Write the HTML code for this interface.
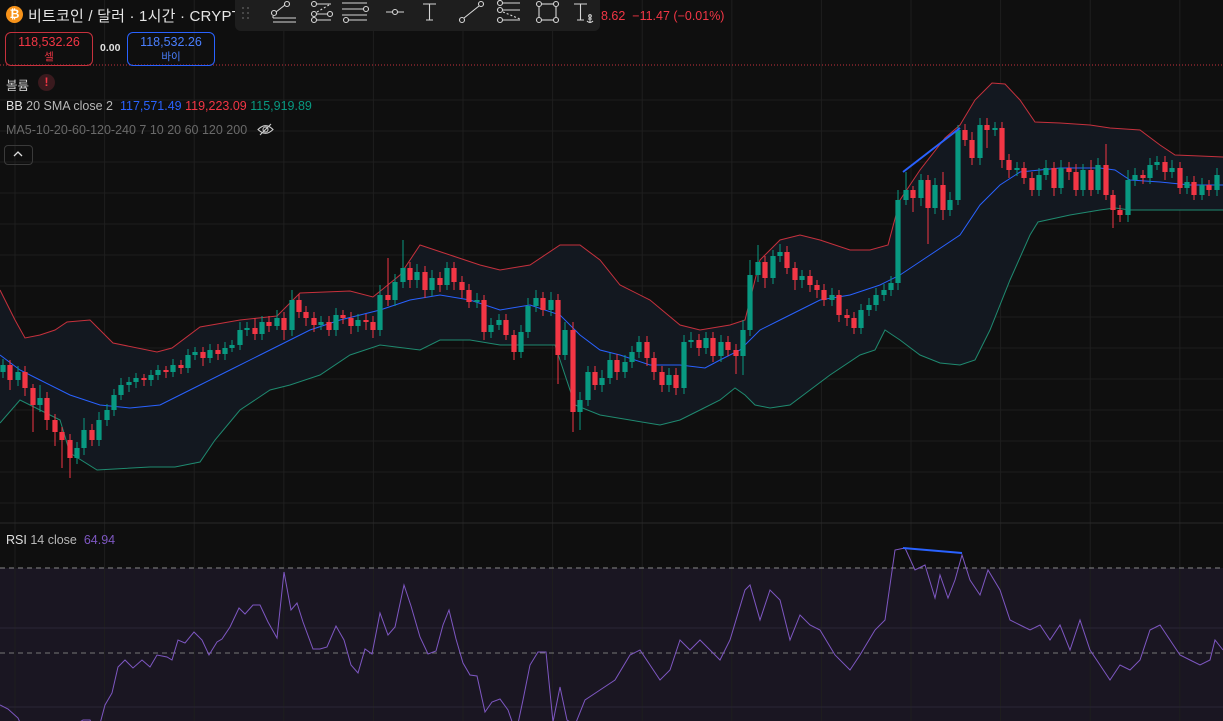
<!DOCTYPE html>
<html><head><meta charset="utf-8">
<style>
html,body{margin:0;padding:0;background:#0f0f0f;width:1223px;height:721px;overflow:hidden;font-family:"Liberation Sans","Noto Sans CJK KR",sans-serif;}
.t{position:absolute;white-space:nowrap}
</style></head><body>
<svg style="position:absolute;left:0;top:0" width="1223" height="721" xmlns="http://www.w3.org/2000/svg">
<rect x="0" y="568" width="1223" height="153" fill="#1a1622"/>
<g stroke="#1e1e1e">
<path d="M15 0V721M104.6 0V721M194.2 0V721M283.8 0V721M373.4 0V721M463 0V721M552.6 0V721M642.2 0V721M731.8 0V721M821.4 0V721M911 0V721M1000.6 0V721M1090.2 0V721M1179.8 0V721"/>
<path d="M0 100H1223M0 131H1223M0 162H1223M0 193H1223M0 224H1223M0 255H1223M0 286H1223M0 317H1223M0 348H1223M0 379H1223M0 410H1223M0 441H1223M0 472H1223M0 503H1223"/>
</g>
<line x1="0" y1="523" x2="1223" y2="523" stroke="#2a2a2a"/>
<path d="M0 628H1223M0 707H1223" stroke="#2a2535"/>
<line x1="0" y1="568" x2="1223" y2="568" stroke="#888" stroke-dasharray="5 4"/>
<line x1="0" y1="653" x2="1223" y2="653" stroke="#777" stroke-dasharray="5 4"/>
<line x1="0" y1="65" x2="1223" y2="65" stroke="#c6313d" stroke-dasharray="1 2"/>

<polygon fill="#131820" points="0,290 15,320 25,338 40,335 55,330 67,322 90,320 113,343 157,352 172,348 200,327 240,320 277,316 300,293 350,291 373,297 400,275 420,245 450,255 480,265 500,270 530,265 560,245 580,245 600,260 620,285 650,300 680,325 700,330 730,325 745,320 760,260 780,240 800,235 820,240 850,250 870,250 888,245 900,200 920,170 945,138 960,125 975,100 992,83 1005,84 1020,100 1035,122 1060,123 1090,125 1110,128 1140,130 1160,145 1175,155 1200,156 1223,157 1223,210 1160,210 1130,210 1115,208 1100,210 1070,215 1038,222 1030,235 1010,280 990,330 975,360 960,365 940,363 920,355 900,340 885,330 875,350 860,355 830,375 810,390 790,405 770,408 755,405 745,395 735,388 720,400 700,410 680,420 660,425 630,420 600,415 575,405 555,345 530,345 500,345 470,340 440,340 420,350 380,345 350,355 320,375 290,385 270,390 240,410 215,440 200,462 175,467 150,467 97,470 70,453 60,420 20,400 0,423"/>
<polyline fill="none" stroke="#c6313d" points="0,290 15,320 25,338 40,335 55,330 67,322 90,320 113,343 157,352 172,348 200,327 240,320 277,316 300,293 350,291 373,297 400,275 420,245 450,255 480,265 500,270 530,265 560,245 580,245 600,260 620,285 650,300 680,325 700,330 730,325 745,320 760,260 780,240 800,235 820,240 850,250 870,250 888,245 900,200 920,170 945,138 960,125 975,100 992,83 1005,84 1020,100 1035,122 1060,123 1090,125 1110,128 1140,130 1160,145 1175,155 1200,156 1223,157"/>
<polyline fill="none" stroke="#2962ff" points="0,355 20,370 40,380 70,395 100,405 130,408 160,405 180,395 200,385 230,370 260,355 280,345 310,330 340,320 380,310 410,300 440,295 470,300 500,310 530,305 560,315 580,335 600,350 620,355 650,365 680,365 705,368 720,360 740,350 760,330 780,320 800,310 820,300 850,295 880,285 900,275 930,255 960,235 980,205 1000,185 1020,172 1040,170 1060,168 1080,168 1100,168 1115,170 1130,180 1160,182 1190,185 1223,185"/>
<polyline fill="none" stroke="#1f8a70" points="0,423 20,400 60,420 70,453 97,470 150,467 175,467 200,462 215,440 240,410 270,390 290,385 320,375 350,355 380,345 420,350 440,340 470,340 500,345 530,345 555,345 575,405 600,415 630,420 660,425 680,420 700,410 720,400 735,388 745,395 755,405 770,408 790,405 810,390 830,375 860,355 875,350 885,330 900,340 920,355 940,363 960,365 975,360 990,330 1010,280 1030,235 1038,222 1070,215 1100,210 1115,208 1130,210 1160,210 1223,210"/>

<g stroke="#089981">
<path stroke-width="1" d="M3 359V378M18 366V386M40 385V412M77 442V464M84 418V455M99 412V446M107 404V426M114 389V416M121 378V400M129 377V392M136 373V388M151 370V386M158 365V380M173 359V377M188 349V373M195 347V360M210 344V363M225 342V360M232 340V352M240 322V350M247 322V336M262 316V340M277 310V330M292 290V336M321 316V330M336 308V336M358 314V332M380 285V336M395 274V306M403 240V288M417 264V288M432 270V296M447 262V290M477 293V308M491 318V338M499 314V330M521 325V358M528 298V338M536 290V312M551 292V316M565 322V360M580 392V430M588 366V406M602 370V392M610 353V384M625 355V378M632 346V368M639 336V358M669 368V392M684 335V394M691 332V348M706 332V354M721 335V362M743 320V375M750 260V336M758 245V282M773 250V284M780 244V262M802 270V288M832 288V306M861 304V334M869 298V316M876 288V311M884 284V301M891 276V296M898 190V290M906 172V205M921 174V206M935 178V214M950 192V216M958 125V205M980 118V165M995 122V136M1017 162V176M1039 168V196M1046 160V180M1061 160V194M1083 164V196M1098 158V194M1128 170V222M1135 168V186M1150 158V184M1157 156V170M1172 160V178M1187 176V194M1202 178V200M1217 168V196"/>
<path stroke-width="5.2" d="M3 365V372M18 372V380M40 398V405M77 448V458M84 430V448M99 420V440M107 410V420M114 395V410M121 385V395M129 382V385M136 378V382M151 375V380M158 370V375M173 365V372M188 355V368M195 352V355M210 350V358M225 348V354M232 345V348M240 330V345M247 328V330M262 322V334M277 318V326M292 300V330M321 322V325M336 315V330M358 320V326M380 295V330M395 282V300M403 268V282M417 272V280M432 278V290M447 268V285M477 300V302M491 325V332M499 320V325M521 332V352M528 306V332M536 298V306M551 300V310M565 330V355M580 400V412M588 372V400M602 378V385M610 360V378M625 362V372M632 352V362M639 342V352M669 375V385M684 342V388M691 340V342M706 338V348M721 342V356M743 330V356M750 275V330M758 262V275M773 256V278M780 252V256M802 276V280M832 295V300M861 310V328M869 305V310M876 295V305M884 290V295M891 283V290M898 200V283M906 190V200M921 180V198M935 185V208M950 200V210M958 130V200M980 125V158M995 128V130M1017 168V170M1039 175V190M1046 168V175M1061 168V188M1083 170V190M1098 165V190M1128 180V215M1135 175V180M1150 165V178M1157 162V165M1172 168V172M1187 182V188M1202 185V195M1217 175V190"/>
</g>
<g stroke="#f23645">
<path stroke-width="1" d="M10 360V390M25 366V396M33 384V432M47 392V430M55 414V446M62 427V468M70 434V478M92 424V446M144 374V386M166 366V378M181 360V374M203 347V366M218 344V360M255 318V340M269 316V332M284 312V340M299 294V318M306 306V326M314 312V332M329 316V336M343 310V324M351 312V334M366 314V330M373 316V338M388 258V306M410 262V288M425 266V298M440 272V292M454 262V290M462 276V298M469 284V308M484 295V340M506 314V340M514 330V360M543 292V316M558 294V384M573 322V432M595 366V390M617 354V380M647 336V366M654 352V380M662 366V392M676 368V395M699 334V356M713 332V362M728 336V356M736 344V374M765 256V288M787 246V274M795 262V290M810 270V292M817 280V298M824 284V306M839 290V322M847 309V326M854 312V334M913 186V212M928 175V244M943 172V220M965 124V146M972 132V165M987 118V148M1002 122V168M1009 154V178M1024 162V184M1032 172V196M1054 162V196M1069 162V180M1076 164V196M1091 160V196M1106 144V200M1113 190V228M1120 205V222M1143 170V184M1165 156V180M1180 162V194M1194 176V200M1209 180V196"/>
<path stroke-width="5.2" d="M10 365V380M25 372V388M33 388V405M47 398V420M55 420V432M62 432V440M70 440V458M92 430V440M144 378V380M166 370V372M181 365V368M203 352V358M218 350V354M255 328V334M269 322V326M284 318V330M299 300V312M306 312V318M314 318V325M329 322V330M343 315V318M351 318V326M366 320V322M373 322V330M388 295V300M410 268V280M425 272V290M440 278V285M454 268V282M462 282V290M469 290V302M484 300V332M506 320V335M514 335V352M543 298V310M558 300V355M573 330V412M595 372V385M617 360V372M647 342V358M654 358V372M662 372V385M676 375V388M699 340V348M713 338V356M728 342V350M736 350V356M765 262V278M787 252V268M795 268V280M810 276V285M817 285V290M824 290V300M839 295V315M847 315V318M854 318V328M913 190V198M928 180V208M943 185V210M965 130V140M972 140V158M987 125V130M1002 128V160M1009 160V170M1024 168V178M1032 178V190M1054 168V188M1069 168V172M1076 172V190M1091 170V190M1106 165V195M1113 195V210M1120 210V215M1143 175V178M1165 162V172M1180 168V188M1194 182V195M1209 185V190"/>
</g>
<line x1="903" y1="172" x2="960" y2="128" stroke="#2962ff" stroke-width="2"/>

<polyline fill="none" stroke="#7e57c2" points="0,705 8,709 18,718 28,740 36,753 45,727 55,752 70,753 75,725 83,720 90,720 97,735 105,705 112,693 118,667 125,660 133,668 142,660 150,667 157,655 167,657 172,660 178,640 185,643 194,632 202,640 209,655 217,642 222,639 230,627 239,608 245,614 253,605 260,605 268,622 277,638 284,572 291,610 297,603 303,622 313,649 320,649 327,647 336,626 344,640 351,665 358,673 365,649 372,654 380,613 388,635 395,627 404,585 411,606 420,637 428,654 436,651 443,625 449,610 456,639 463,663 470,675 477,676 485,712 492,702 500,699 508,710 516,733 523,700 530,665 538,652 546,652 553,722 560,687 567,720 575,725 585,700 600,690 615,680 630,655 640,650 650,665 660,680 670,670 680,640 690,650 700,640 710,650 720,660 730,640 745,590 750,585 760,620 770,590 780,600 790,640 800,615 810,625 820,630 835,655 850,670 860,655 875,630 885,620 895,550 905,548 915,570 925,565 935,598 940,575 948,598 955,580 962,555 970,580 980,595 988,570 1000,590 1010,620 1020,625 1030,630 1040,625 1050,640 1060,625 1070,650 1080,620 1090,650 1100,665 1110,680 1120,665 1130,670 1140,660 1150,630 1160,625 1170,640 1180,655 1190,660 1200,665 1210,660 1215,640 1223,650"/>
<line x1="903" y1="548" x2="962" y2="553" stroke="#2962ff" stroke-width="2"/>
</svg>

<div class="t" style="left:6px;top:6px;width:17px;height:17px;border-radius:50%;background:#f7931a;color:#fff;font-size:12px;font-weight:bold;text-align:center;line-height:17px">₿</div>
<div class="t" style="left:28px;top:5px;font-size:15px;color:#e6e6e6;letter-spacing:0.2px">비트코인 / 달러 · 1시간 · CRYPT</div>
<div class="t" style="left:601px;top:9px;font-size:12.5px;color:#f23645">8.62 &nbsp;−11.47 (−0.01%)</div>

<div style="position:absolute;left:235px;top:0;width:365px;height:31px;background:#1e1e1e;border-radius:0 0 6px 6px"></div>
<svg style="position:absolute;left:235px;top:0" width="365" height="31" xmlns="http://www.w3.org/2000/svg" fill="none" stroke="#d6d6d6" stroke-width="1.1">
<g fill="#555" stroke="none"><circle cx="8" cy="8" r="1"/><circle cx="13" cy="8" r="1"/><circle cx="8" cy="13" r="1"/><circle cx="13" cy="13" r="1"/><circle cx="8" cy="18" r="1"/><circle cx="13" cy="18" r="1"/></g>
<circle cx="39" cy="13" r="2.5"/><circle cx="52" cy="4" r="2.5"/><path d="M41 12L50 5M38 16v2M38 18h23M38 22h23"/>
<circle cx="79" cy="4" r="2.5"/><circle cx="79" cy="14" r="2.5"/><circle cx="79" cy="20" r="2.5"/><circle cx="95" cy="14" r="2.5"/><path d="M82 4h14M82 14h10M82 20h14"/><path d="M82 12l12-7" stroke-dasharray="2 2"/>
<path d="M107 3h25M107 9h22M107 15h25M114 20h18"/><circle cx="131" cy="9" r="2.5"/><circle cx="111" cy="20" r="2.5"/>
<path d="M151 12h6M163 12h6"/><circle cx="160" cy="12" r="2.5"/>
<path d="M188 4h13M194.5 4v16M191 20h7"/>
<circle cx="227" cy="20" r="2.5"/><circle cx="246" cy="4" r="2.5"/><path d="M229 18l15-12"/>
<circle cx="265" cy="3" r="2.5"/><circle cx="265" cy="10" r="2.5"/><circle cx="265" cy="20" r="2.5"/><path d="M268 3h17M268 10h17M268 20h17"/><path d="M268 12l17 7" stroke-dasharray="2 2"/>
<rect x="304" y="4" width="17" height="16"/><circle cx="304" cy="4" r="2.5" fill="#1e1e1e"/><circle cx="321" cy="4" r="2.5" fill="#1e1e1e"/><circle cx="304" cy="20" r="2.5" fill="#1e1e1e"/><circle cx="321" cy="20" r="2.5" fill="#1e1e1e"/>
<path d="M339 4h13M345.5 4v16M342 20h7"/><circle cx="355" cy="16" r="1.3"/><path d="M355 17v6M352 21q3 3 6 0M353 19h4"/>
</svg>

<div class="t" style="left:5px;top:32px;width:86px;height:32px;border:1px solid #c6313d;border-radius:6px;text-align:center;color:#f23645">
<div style="font-size:12.5px;margin-top:2px">118,532.26</div><div style="font-size:10.5px">셀</div></div>
<div class="t" style="left:100px;top:42px;font-size:10.5px;color:#e0e0e0;font-weight:bold">0.00</div>
<div class="t" style="left:127px;top:32px;width:86px;height:32px;border:1px solid #2962ff;border-radius:6px;text-align:center;color:#4a7fff">
<div style="font-size:12.5px;margin-top:2px">118,532.26</div><div style="font-size:10.5px">바이</div></div>

<div class="t" style="left:6px;top:75px;font-size:12.5px;color:#d0d0d0">볼륨</div>
<div class="t" style="left:38px;top:74px;width:17px;height:17px;border-radius:50%;background:#3a1a1e;color:#f23645;font-size:12px;text-align:center;line-height:17px;font-weight:bold">!</div>
<div class="t" style="left:6px;top:99px;font-size:12.5px;color:#b8b8b8"><span style="color:#e0e0e0">BB</span> 20 SMA close 2 &nbsp;<span style="color:#2962ff">117,571.49</span> <span style="color:#f23645">119,223.09</span> <span style="color:#089981">115,919.89</span></div>
<div class="t" style="left:6px;top:123px;font-size:12.5px;color:#6a6a6a">MA5-10-20-60-120-240 7 10 20 60 120 200</div>
<svg class="t" style="left:257px;top:123px" width="17" height="13" fill="none" stroke="#ccc" stroke-width="1.1"><path d="M1 6.5Q8.5-1 16 6.5Q8.5 14 1 6.5Z"/><circle cx="8.5" cy="6.5" r="2.5"/><path d="M3 12L14 1"/></svg>
<div class="t" style="left:4px;top:145px;width:27px;height:18px;border:1px solid #3a3a3a;border-radius:4px"></div>
<svg class="t" style="left:13px;top:151px" width="10" height="6" fill="none" stroke="#ddd" stroke-width="1.3"><path d="M1 5L5 1L9 5"/></svg>

<div class="t" style="left:6px;top:533px;font-size:12.5px;color:#b8b8b8"><span style="color:#e0e0e0">RSI</span> 14 close &nbsp;<span style="color:#7e57c2">64.94</span></div>
</body></html>
